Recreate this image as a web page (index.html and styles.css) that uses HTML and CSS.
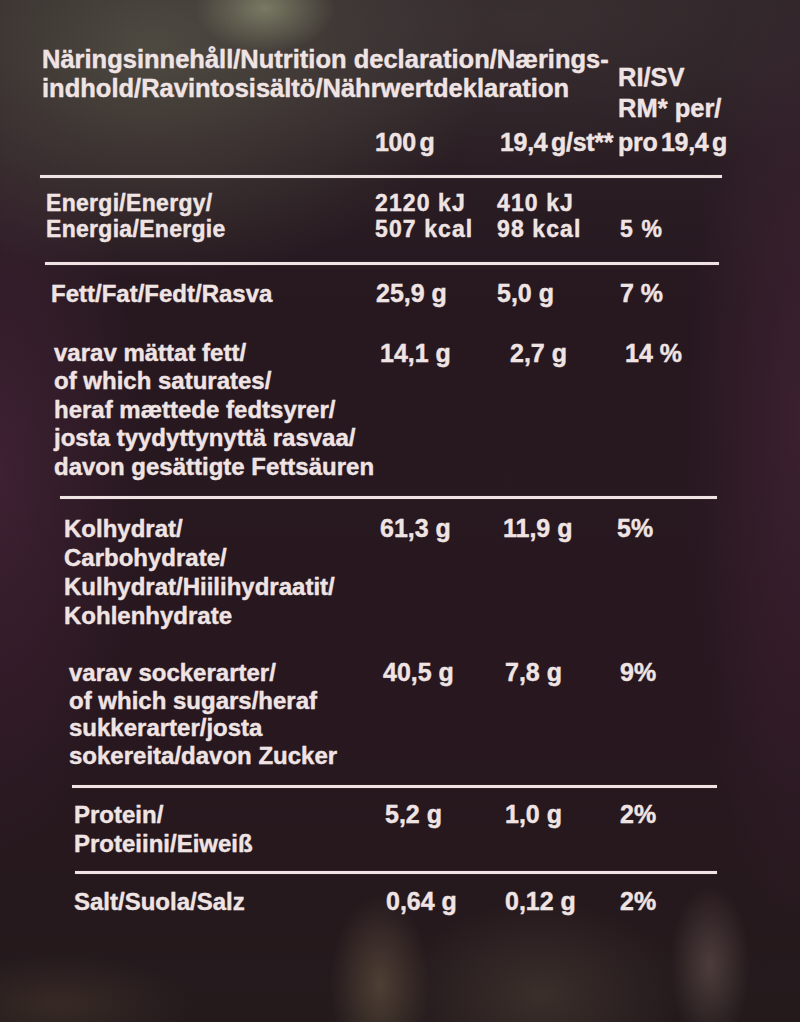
FILE: index.html
```html
<!DOCTYPE html>
<html lang="sv">
<head>
<meta charset="utf-8">
<title>Näringsinnehåll</title>
<link rel="stylesheet" href="styles.css">
</head>
<body>
<main class="label">
  <header class="head">
    <div class="title-block">
      <div>Näringsinnehåll/Nutrition declaration/Nærings-</div>
      <div>indhold/Ravintosisältö/Nährwertdeklaration</div>
    </div>
    <div class="ri-block">
      <div>RI/SV</div>
      <div>RM* per/</div>
    </div>
  </header>
  <div class="row head-vals">
    <span></span><span>100 g</span><span>19,4 g/st**</span><span>pro 19,4 g</span>
  </div>
  <hr class="rule rule1">
  <div class="row energy">
    <span class="name">Energi/Energy/<br>Energia/Energie</span>
    <span class="val">2120 kJ<br>507 kcal</span>
    <span class="val">410 kJ<br>98 kcal</span>
    <span class="val"><br>5 %</span>
  </div>
  <hr class="rule rule2">
  <div class="row fat">
    <span class="name">Fett/Fat/Fedt/Rasva</span>
    <span class="val">25,9 g</span>
    <span class="val">5,0 g</span>
    <span class="val">7 %</span>
  </div>
  <div class="row sat">
    <span class="name">varav mättat fett/<br>of which saturates/<br>heraf mættede fedtsyrer/<br>josta tyydyttynyttä rasvaa/<br>davon gesättigte Fettsäuren</span>
    <span class="val">14,1 g</span>
    <span class="val">2,7 g</span>
    <span class="val">14 %</span>
  </div>
  <hr class="rule rule3">
  <div class="row carb">
    <span class="name">Kolhydrat/<br>Carbohydrate/<br>Kulhydrat/Hiilihydraatit/<br>Kohlenhydrate</span>
    <span class="val">61,3 g</span>
    <span class="val">11,9 g</span>
    <span class="val">5%</span>
  </div>
  <div class="row sugar">
    <span class="name">varav sockerarter/<br>of which sugars/heraf<br>sukkerarter/josta<br>sokereita/davon Zucker</span>
    <span class="val">40,5 g</span>
    <span class="val">7,8 g</span>
    <span class="val">9%</span>
  </div>
  <hr class="rule rule4">
  <div class="row protein">
    <span class="name">Protein/<br>Proteiini/Eiweiß</span>
    <span class="val">5,2 g</span>
    <span class="val">1,0 g</span>
    <span class="val">2%</span>
  </div>
  <hr class="rule rule5">
  <div class="row salt">
    <span class="name">Salt/Suola/Salz</span>
    <span class="val">0,64 g</span>
    <span class="val">0,12 g</span>
    <span class="val">2%</span>
  </div>
</main>
</body>
</html>
```
FILE: styles.css
```css
html, body {
  margin: 0;
  padding: 0;
  width: 800px;
  height: 1022px;
  overflow: hidden;
}

body {
  background-color: #261720;
  background-image:
    radial-gradient(ellipse 70px 45px at 265px 8px, rgba(175, 180, 140, 0.5), transparent 100%),
    radial-gradient(ellipse 340px 230px at 150px 50px, rgba(100, 100, 82, 0.6), transparent 100%),
    radial-gradient(ellipse 420px 160px at 520px 20px, rgba(70, 62, 62, 0.5), transparent 100%),
    radial-gradient(ellipse 140px 380px at 0px 470px, rgba(80, 40, 66, 0.55), transparent 100%),
    radial-gradient(ellipse 110px 520px at 800px 420px, rgba(78, 40, 64, 0.5), transparent 100%),
    radial-gradient(ellipse 50px 90px at 380px 985px, rgba(135, 115, 85, 0.42), transparent 100%),
    radial-gradient(ellipse 140px 95px at 540px 995px, rgba(100, 85, 70, 0.35), transparent 100%),
    radial-gradient(ellipse 40px 80px at 710px 965px, rgba(135, 115, 105, 0.4), transparent 100%),
    radial-gradient(ellipse 130px 50px at 60px 1005px, rgba(90, 72, 55, 0.35), transparent 100%),
    linear-gradient(180deg, #2c2226 0%, #271820 30%, #28171f 70%, #241a1c 100%);
  font-family: "Liberation Sans", Arial, sans-serif;
  font-weight: 700;
  color: #efe4e3;
}

.label {
  display: block;
  width: 800px;
  padding-top: 45px;
  text-shadow: 0 0 1px rgba(255, 240, 240, 0.35);
  -webkit-text-stroke: 0.3px #efe4e3;
}

.head {
  display: flex;
  align-items: flex-start;
  padding-left: 42px;
  font-size: 25.5px;
  line-height: 28.5px;
  white-space: nowrap;
}

.title-block {
  width: 576px;
}

.ri-block {
  padding-top: 17px;
  line-height: 31px;
}

.row {
  --pad: 50px;
  --c2: 380px;
  --c3: 500px;
  --c4: 620px;
  display: grid;
  grid-template-columns: calc(var(--c2) - var(--pad)) calc(var(--c3) - var(--c2)) calc(var(--c4) - var(--c3)) auto;
  align-items: start;
  padding-left: var(--pad);
  white-space: nowrap;
}

.name {
  font-size: 24px;
}

.val {
  font-size: 25px;
}

.head-vals {
  --pad: 42px;
  --c2: 375px;
  --c3: 500px;
  --c4: 618px;
  margin-top: 4px;
  font-size: 25px;
  line-height: 28px;
  letter-spacing: -0.3px;
  word-spacing: -3px;
}

.rule {
  height: 3px;
  border: 0;
  margin-bottom: 0;
  background: #efe4e3;
  box-shadow: 0 0 1px rgba(255, 240, 240, 0.4);
}

.rule1 { margin: 19px 0 0 40px; width: 682px; }
.rule2 { margin: 19px 0 0 45px; width: 674px; }
.rule3 { margin: 15px 0 0 60px; width: 657px; }
.rule4 { margin: 16px 0 0 72px; width: 645px; }
.rule5 { margin: 13px 0 0 75px; width: 642px; }

.energy {
  --pad: 46px;
  --c2: 375px;
  --c3: 497px;
  --c4: 620px;
  margin-top: 13px;
  line-height: 25.8px;
}

.energy .name {
  font-size: 23px;
  letter-spacing: 0.3px;
}

.energy .val {
  font-size: 23px;
  letter-spacing: 1.1px;
}

.fat {
  --pad: 51px;
  --c2: 376px;
  --c3: 497px;
  --c4: 620px;
  margin-top: 15px;
  line-height: 27px;
}

.sat {
  --pad: 54px;
  --c2: 380px;
  --c3: 510px;
  --c4: 625px;
  margin-top: 32px;
  line-height: 28.5px;
}

.carb {
  --pad: 64px;
  --c2: 380px;
  --c3: 503px;
  --c4: 617px;
  margin-top: 15px;
  line-height: 29px;
}

.sugar {
  --pad: 69px;
  --c2: 383px;
  --c3: 505px;
  --c4: 620px;
  margin-top: 29px;
  line-height: 27.5px;
}

.protein {
  --pad: 74px;
  --c2: 385px;
  --c3: 505px;
  --c4: 620px;
  margin-top: 12px;
  line-height: 29px;
}

.salt {
  --pad: 74px;
  --c2: 386px;
  --c3: 505px;
  --c4: 620px;
  margin-top: 14px;
  line-height: 27px;
}
```
